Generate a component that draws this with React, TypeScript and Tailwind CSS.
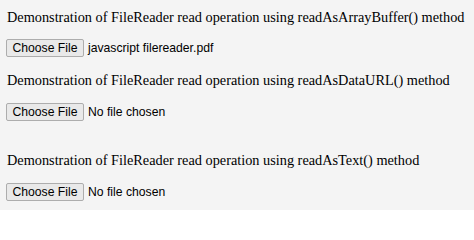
import React from "react";

const SERIF = "font-['Liberation_Serif','Times_New_Roman',serif]";
const SANS = "font-['Liberation_Sans',Arial,sans-serif]";

function FilePicker({ fileName }: { fileName: string }) {
  return (
    <div className={`flex h-[18px] items-center ${SANS} text-[12.2px] text-black`}>
      <span className="ml-[6px] flex h-[18px] w-[78px] items-center justify-center rounded-[2px] border border-[#adadad] bg-[#e9e9e9] leading-none">
        Choose File
      </span>
      <span className="ml-[4px] leading-none">{fileName}</span>
    </div>
  );
}

function Heading({ children }: { children: React.ReactNode }) {
  return (
    <div className={`pl-[7px] ${SERIF} text-[14.3px] leading-[16px] text-black`}>{children}</div>
  );
}

export default function App() {
  return (
    <div className="flex h-[210px] w-[474px] flex-col bg-[#f4f4f4] pt-[9px]">
      <Heading>Demonstration of FileReader read operation using readAsArrayBuffer() method</Heading>
      <div className="mt-[14px]">
        <FilePicker fileName="javascript filereader.pdf" />
      </div>
      <div className="mt-[15px]">
        <Heading>Demonstration of FileReader read operation using readAsDataURL() method</Heading>
      </div>
      <div className="mt-[15px]">
        <FilePicker fileName="No file chosen" />
      </div>
      <div className="mt-[31px]">
        <Heading>Demonstration of FileReader read operation using readAsText() method</Heading>
      </div>
      <div className="mt-[15px]">
        <FilePicker fileName="No file chosen" />
      </div>
    </div>
  );
}
